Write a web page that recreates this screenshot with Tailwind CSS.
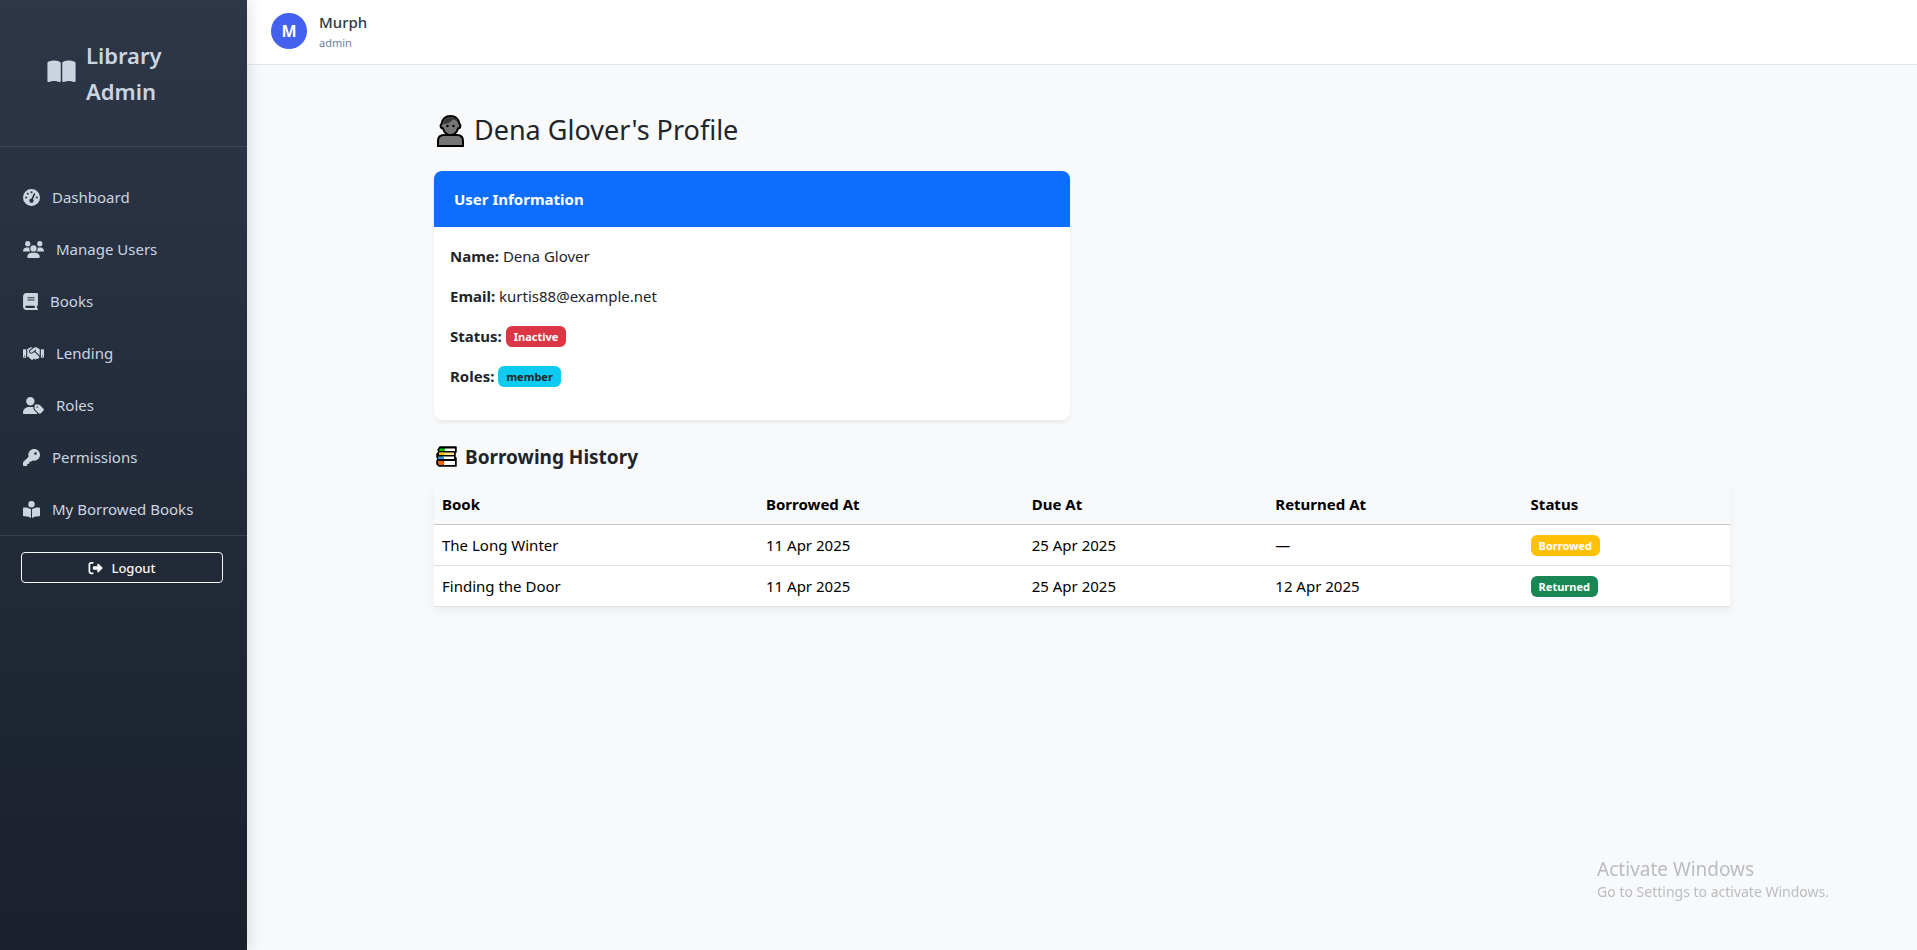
<!DOCTYPE html>
<html lang="en">
<head>
<meta charset="utf-8">
<meta name="viewport" content="width=device-width, initial-scale=1">
<title>Library Admin</title>
<script src="https://cdn.jsdelivr.net/npm/@tailwindcss/browser@4"></script>
</head>
<body class="flex min-h-screen bg-[#f8f9fb] font-['Noto_Sans','Open_Sans',sans-serif] text-[15px] leading-6 text-[#212529]">

<aside class="relative z-10 min-h-screen w-[247px] shrink-0 bg-linear-to-b from-[#2d3748] to-[#1a202c] text-[#cbd5e0] shadow-[4px_0_12px_rgba(0,0,0,0.1)]">
  <div class="flex items-center gap-[10px] border-b border-white/10 py-[37px] pr-12 pl-[47px]">
    <svg class="h-7 w-[29px] shrink-0 fill-current pb-[3px]" viewBox="0 0 576 512" aria-hidden="true"><path d="M249.6 471.5c10.8 3.8 22.4-4.1 22.4-15.5V78.6c0-4.2-1.6-8.4-5-11C247.4 52 202.4 32 144 32C93.5 32 46.3 45.3 18.1 56.1C6.8 60.5 0 71.7 0 83.8V454.1c0 11.9 12.8 20.2 24.1 16.5C55.6 460.1 105.5 448 144 448c33.9 0 79 14 105.6 23.5zm76.8 0C353 462 398.1 448 432 448c38.5 0 88.4 12.1 119.9 22.6c11.3 3.8 24.1-4.6 24.1-16.5V83.8c0-12.1-6.8-23.3-18.1-27.6C529.7 45.3 482.5 32 432 32c-58.4 0-103.4 20-123 35.6c-3.3 2.6-5 6.8-5 11V456c0 11.4 11.7 19.3 22.4 15.5z"/></svg>
    <span class="text-[22px] leading-9 font-semibold">Library Admin</span>
  </div>
  <nav class="flex flex-col gap-1 border-b border-white/10 pt-[26px] pb-0.5 pl-[23px]">
    <a href="#" class="flex h-12 items-center gap-3"><svg class="h-[17px] w-[17px] fill-current" viewBox="0 0 512 512" aria-hidden="true"><path d="M0 256a256 256 0 1 1 512 0A256 256 0 1 1 0 256zM288 96a32 32 0 1 0 -64 0 32 32 0 1 0 64 0zM256 416c35.3 0 64-28.7 64-64c0-17.4-6.9-33.1-18.1-44.6L366 161.7c5.3-12.1-.2-26.3-12.3-31.6s-26.3 .2-31.6 12.3L257.9 288c-.6 0-1.3 0-1.9 0c-35.3 0-64 28.7-64 64s28.7 64 64 64zM176 144a32 32 0 1 0 -64 0 32 32 0 1 0 64 0zM96 288a32 32 0 1 0 0-64 32 32 0 1 0 0 64zm352-32a32 32 0 1 0 -64 0 32 32 0 1 0 64 0z"/></svg>Dashboard</a>
    <a href="#" class="flex h-12 items-center gap-3"><svg class="h-[17px] w-[21px] fill-current" viewBox="0 0 640 512" aria-hidden="true"><path d="M144 0a80 80 0 1 1 0 160A80 80 0 1 1 144 0zM512 0a80 80 0 1 1 0 160A80 80 0 1 1 512 0zM0 298.7C0 239.8 47.8 192 106.7 192h42.7c15.9 0 31 3.5 44.6 9.7c-1.3 7.2-1.9 14.7-1.9 22.3c0 38.2 16.8 72.5 43.3 96c-.2 0-.4 0-.7 0H21.3C9.6 320 0 310.4 0 298.7zM405.3 320c-.2 0-.4 0-.7 0c26.6-23.5 43.3-57.8 43.3-96c0-7.6-.7-15-1.9-22.3c13.6-6.3 28.7-9.7 44.6-9.7h42.7C592.2 192 640 239.8 640 298.7c0 11.8-9.6 21.3-21.3 21.3H405.3zM224 224a96 96 0 1 1 192 0 96 96 0 1 1 -192 0zM128 485.3C128 411.7 187.7 352 261.3 352H378.7C452.3 352 512 411.7 512 485.3c0 14.7-11.9 26.7-26.7 26.7H154.7c-14.7 0-26.7-11.9-26.7-26.7z"/></svg>Manage Users</a>
    <a href="#" class="flex h-12 items-center gap-3"><svg class="h-[17px] w-[15px] fill-current" viewBox="0 0 448 512" aria-hidden="true"><path d="M96 0C43 0 0 43 0 96V416c0 53 43 96 96 96H384h32c17.7 0 32-14.3 32-32s-14.3-32-32-32V384c17.7 0 32-14.3 32-32V32c0-17.7-14.3-32-32-32H384 96zm0 384H352v64H96c-17.7 0-32-14.3-32-32s14.3-32 32-32zm32-240c0-8.8 7.2-16 16-16H336c8.8 0 16 7.2 16 16s-7.2 16-16 16H144c-8.8 0-16-7.2-16-16zm16 48H336c8.8 0 16 7.2 16 16s-7.2 16-16 16H144c-8.8 0-16-7.2-16-16s7.2-16 16-16z"/></svg>Books</a>
    <a href="#" class="flex h-12 items-center gap-3"><svg class="h-[17px] w-[21px] fill-current" viewBox="0 0 640 512" aria-hidden="true"><path d="M323.4 85.2l-96.8 78.4c-16.1 13-19.2 36.4-7 53.1c12.9 17.8 38 21.3 55.3 7.8l99.3-77.2c7-5.4 17-4.2 22.5 2.8s4.2 17-2.8 22.5l-20.9 16.2L512 316.8V128h-.7l-3.9-2.5L434.8 79c-15.3-9.8-33.2-15-51.4-15c-21.8 0-43 7.5-60 21.2zm22.8 124.4l-51.7 40.2C263 274.3 217.3 268 193.7 235.6c-22.2-30.5-16.6-73.1 12.7-96.8l83.2-67.3c-11.6-4.9-24.1-7.4-36.8-7.4C234 64 215.7 69.6 200 80l-72 48V352h28.2l91.4 83.4c19.6 17.9 49.9 16.5 67.8-3.1c5.5-6.1 9.2-13.2 11.1-20.6l17 15.6c19.5 17.9 49.9 16.6 67.8-2.9c4.5-4.9 7.8-10.6 9.9-16.5c19.4 13 45.8 10.3 62.1-7.5c17.9-19.5 16.6-49.9-2.9-67.8l-134.2-123zM16 128c-8.8 0-16 7.2-16 16V352c0 17.7 14.3 32 32 32H64c17.7 0 32-14.3 32-32V128H16zM48 320a16 16 0 1 1 0 32 16 16 0 1 1 0-32zM544 128V352c0 17.7 14.3 32 32 32h32c17.7 0 32-14.3 32-32V144c0-8.8-7.2-16-16-16H544zm32 208a16 16 0 1 1 32 0 16 16 0 1 1 -32 0z"/></svg>Lending</a>
    <a href="#" class="flex h-12 items-center gap-3"><svg class="h-[17px] w-[21px] fill-current" viewBox="0 0 640 512" aria-hidden="true"><path d="M224 256A128 128 0 1 0 224 0a128 128 0 1 0 0 256zm-45.7 48C79.8 304 0 383.8 0 482.3C0 498.7 13.3 512 29.7 512H418.3c10 0 18.8-4.9 24.2-12.5l-99.2-99.2c-14.9-14.9-23.3-35.1-23.3-56.1v-33c-15.9-4.7-32.8-7.2-50.3-7.2H178.3zM384 224c-17.7 0-32 14.3-32 32v82.7c0 17 6.7 33.3 18.7 45.3L478.1 491.3c18.7 18.7 49.1 18.7 67.9 0l73.4-73.4c18.7-18.7 18.7-49.1 0-67.9L512 242.7c-12-12-28.3-18.7-45.3-18.7H384zm24 80a24 24 0 1 1 48 0 24 24 0 1 1 -48 0z"/></svg>Roles</a>
    <a href="#" class="flex h-12 items-center gap-3"><svg class="h-[17px] w-[17px] fill-current" viewBox="0 0 512 512" aria-hidden="true"><path d="M336 352c97.2 0 176-78.8 176-176S433.2 0 336 0S160 78.8 160 176c0 18.7 2.9 36.8 8.3 53.7L7 391c-4.5 4.5-7 10.6-7 17v80c0 13.3 10.7 24 24 24h80c13.3 0 24-10.7 24-24V448h40c13.3 0 24-10.7 24-24V384h40c6.4 0 12.5-2.5 17-7l33.3-33.3c16.9 5.4 35 8.3 53.7 8.3zM376 96a40 40 0 1 1 0 80 40 40 0 1 1 0-80z"/></svg>Permissions</a>
    <a href="#" class="flex h-12 items-center gap-3"><svg class="h-[17px] w-[17px] fill-current" viewBox="0 0 512 512" aria-hidden="true"><path d="M160 96a96 96 0 1 1 192 0A96 96 0 1 1 160 96zm80 152V512l-48.4-24.2c-20.9-10.4-43.5-17-66.8-19.3l-96-9.6C12.5 457.2 0 443.5 0 427V224c0-17.7 14.3-32 32-32H62.3c63.6 0 125.6 19.6 177.7 56zm32 264V248c52.1-36.4 114.1-56 177.7-56H480c17.7 0 32 14.3 32 32V427c0 16.4-12.5 30.2-28.8 31.8l-96 9.6c-23.2 2.3-45.9 8.9-66.8 19.3L272 512z"/></svg>My Borrowed Books</a>
  </nav>
  <div class="pt-4 pr-6 pl-[21px]">
    <button type="button" class="flex h-[31px] w-full items-center justify-center gap-2 rounded border border-[#f8f9fa] text-[13px] font-medium text-[#f8f9fa]"><svg class="h-[14px] w-[15px] fill-current" viewBox="0 0 512 512" aria-hidden="true"><path d="M377.9 105.9L500.7 228.7c7.2 7.2 11.3 17.1 11.3 27.3s-4.1 20.1-11.3 27.3L377.9 406.1c-6.4 6.4-15 9.9-24 9.9c-18.7 0-33.9-15.2-33.9-33.9l0-62.1-128 0c-17.7 0-32-14.3-32-32l0-64c0-17.7 14.3-32 32-32l128 0 0-62.1c0-18.7 15.2-33.9 33.9-33.9c9 0 17.6 3.6 24 9.9zM160 96L96 96c-17.7 0-32 14.3-32 32l0 256c0 17.7 14.3 32 32 32l64 0c17.7 0 32 14.3 32 32s-14.3 32-32 32l-64 0c-53 0-96-43-96-96L0 128C0 75 43 32 96 32l64 0c17.7 0 32 14.3 32 32s-14.3 32-32 32z"/></svg>Logout</button>
  </div>
</aside>

<div class="flex min-w-0 flex-1 flex-col">
  <header class="flex h-[65px] items-center gap-3 border-b border-[#e2e8f0] bg-white px-6 pb-[3px]">
    <div class="flex size-9 items-center justify-center rounded-full bg-[#4361ee] text-base font-bold text-white">M</div>
    <div class="flex flex-col">
      <span class="leading-6 font-medium text-[#2d3748]">Murph</span>
      <span class="text-[11px] leading-[18px] text-[#718096]">admin</span>
    </div>
  </header>

  <main class="mx-auto w-full max-w-[1320px] px-3 pt-12">
    <h1 class="flex items-center gap-2 text-[27px] leading-[34px]">
      <svg class="h-[34px] w-8" viewBox="0 0 32 34" aria-hidden="true"><path d="M4 33v-5q0-6 6-6h13q6 0 6 6v5z" fill="#767676" stroke="#000" stroke-width="2"/><path d="M16.500 3q7.500 0 9 8q1.500 1 .5 3.500q-1 1-2 1q-2 6.500-7.500 6.500t-7.500-6.500q-1 0-2-1q-1-2.500.5-3.500q1.500-8 9-8z" fill="#767676" stroke="#000" stroke-width="2"/><path d="M9 11q1-6.500 7.500-7q6 .5 7.500 5.500q-2.500-3-5-3q-4 4.500-10 4.500z" fill="#383838"/><circle cx="13.500" cy="13" r="1.200"/><circle cx="19.500" cy="13" r="1.200"/></svg>
      Dena Glover's Profile
    </h1>

    <section class="mt-6 w-1/2 pr-3">
      <div class="overflow-hidden rounded-lg bg-white shadow-[0_2px_4px_rgba(0,0,0,0.075)]">
        <h2 class="bg-[#0d6efd] px-5 py-4 font-bold text-white">User Information</h2>
        <div class="flex flex-col gap-4 px-4 pt-[17px] pb-8">
          <p><strong class="font-bold">Name:</strong> Dena Glover</p>
          <p><strong class="font-bold">Email:</strong> kurtis88@example.net</p>
          <p class="flex items-center gap-1"><strong class="font-bold">Status:</strong> <span class="rounded-md bg-[#dc3545] px-2 text-[11px] leading-[21px] font-bold text-white">Inactive</span></p>
          <p class="flex items-center gap-1"><strong class="font-bold">Roles:</strong> <span class="rounded-md bg-[#0dcaf0] px-2 text-[11px] leading-[21px] font-bold text-[#212529]">member</span></p>
        </div>
      </div>
    </section>

    <h2 class="mt-[25px] flex items-center gap-[5px] text-[19px] leading-6 font-bold">
      <svg class="h-6 w-[26px]" viewBox="0 0 26 24" aria-hidden="true"><path d="M6 2H22V7H21V12H20V13H22V21H5L3 19V16L4 14L3 12V9L5 7L4 5Z" fill="#000" stroke="#000" stroke-width="1.500" stroke-linejoin="round"/><path d="M11 3.500H21V6H11z" fill="#fff"/><path d="M6 3.500H11V6H5z" fill="#16c60c"/><path d="M5 7.500H20V10H5z" fill="#fce38a"/><path d="M5 7.500H10V10H5z" fill="#ffb900"/><path d="M9 11.500H20V14H9z" fill="#fff"/><path d="M4 11.500H10V14H4z" fill="#3a96dd"/><path d="M10 16H21V20H10z" fill="#fff"/><path d="M4 16H9Q12 18 9 20H5L4 18z" fill="#f7630c"/></svg>
      Borrowing History
    </h2>

    <table class="mt-[15px] w-full table-fixed bg-white text-left text-black shadow-[0_4px_10px_rgba(0,0,0,0.06)]">
      <colgroup><col class="w-[25%]"><col class="w-[20.500%]"><col class="w-[18.800%]"><col class="w-[19.700%]"><col></colgroup>
      <thead class="bg-[#f8f9fa]">
        <tr class="border-b border-[#c6c7c8]">
          <th scope="col" class="p-2 font-bold">Book</th>
          <th scope="col" class="p-2 font-bold">Borrowed At</th>
          <th scope="col" class="p-2 font-bold">Due At</th>
          <th scope="col" class="p-2 font-bold">Returned At</th>
          <th scope="col" class="p-2 font-bold">Status</th>
        </tr>
      </thead>
      <tbody>
        <tr class="border-b border-[#dee2e6]">
          <td class="p-2">The Long Winter</td>
          <td class="p-2">11 Apr 2025</td>
          <td class="p-2">25 Apr 2025</td>
          <td class="p-2">—</td>
          <td class="p-2"><div class="flex h-6 items-center"><span class="rounded-md bg-[#ffc107] px-2 text-[11px] leading-[21px] font-bold text-white">Borrowed</span></div></td>
        </tr>
        <tr class="border-b border-[#dee2e6]">
          <td class="p-2">Finding the Door</td>
          <td class="p-2">11 Apr 2025</td>
          <td class="p-2">25 Apr 2025</td>
          <td class="p-2">12 Apr 2025</td>
          <td class="p-2"><div class="flex h-6 items-center"><span class="rounded-md bg-[#198754] px-2 text-[11px] leading-[21px] font-bold text-white">Returned</span></div></td>
        </tr>
      </tbody>
    </table>
  </main>
</div>

<div class="pointer-events-none fixed right-[88px] bottom-[47px] text-[#bbbcbd]">
  <p class="text-[19px] leading-6">Activate Windows</p>
  <p class="text-sm leading-[22px]">Go to Settings to activate Windows.</p>
</div>
</body>
</html>
